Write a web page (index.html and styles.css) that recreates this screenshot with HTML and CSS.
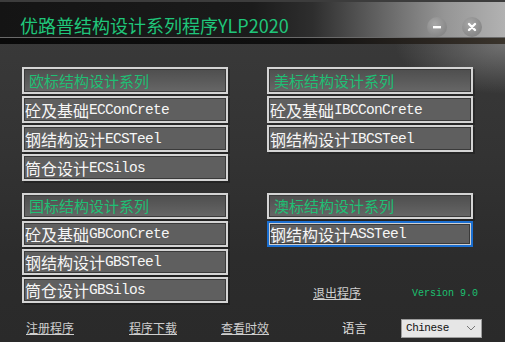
FILE: index.html
```html
<!DOCTYPE html>
<html lang="zh-CN">
<head>
<meta charset="utf-8">
<title>优路普结构设计系列程序YLP2020</title>
<link rel="stylesheet" href="styles.css">
</head>
<body>
<div class="win">
  <header class="titlebar">
    <h1 class="title">优路普结构设计系列程序YLP2020</h1>
    <div class="ctrls">
      <span class="cbtn"><svg width="10" height="10" viewBox="0 0 10 10"><rect x="1" y="4" width="8" height="2.4" fill="#fff"/></svg></span>
      <span class="cbtn"><svg width="10" height="10" viewBox="0 0 10 10"><path d="M2 2L8 8M8 2L2 8" stroke="#fff" stroke-width="2.4" stroke-linecap="round"/></svg></span>
    </div>
  </header>
  <div class="band"></div>
  <main class="grid">
    <section class="group g-tall">
      <div class="box head">欧标结构设计系列</div>
      <div class="box">砼及基础<span class="lat">ECConCrete</span></div>
      <div class="box">钢结构设计<span class="lat">ECSTeel</span></div>
      <div class="box">筒仓设计<span class="lat">ECSilos</span></div>
    </section>
    <section class="group g-tall">
      <div class="box head">美标结构设计系列</div>
      <div class="box">砼及基础<span class="lat">IBCConCrete</span></div>
      <div class="box">钢结构设计<span class="lat">IBCSTeel</span></div>
    </section>
    <section class="group">
      <div class="box head">国标结构设计系列</div>
      <div class="box">砼及基础<span class="lat">GBConCrete</span></div>
      <div class="box">钢结构设计<span class="lat">GBSTeel</span></div>
      <div class="box">筒仓设计<span class="lat">GBSilos</span></div>
    </section>
    <section class="group">
      <div class="box head">澳标结构设计系列</div>
      <div class="box active">钢结构设计<span class="lat">ASSTeel</span></div>
      <div class="exitrow">
        <span class="link">退出程序</span>
        <span class="ver">Version 9.0</span>
      </div>
    </section>
  </main>
  <footer class="bottombar">
    <span class="link">注册程序</span>
    <span class="link l2">程序下载</span>
    <span class="link l3">查看时效</span>
    <span class="lang">语言</span>
    <div class="select">
      <span class="sel-text">Chinese</span>
      <svg class="chev" width="10" height="6" viewBox="0 0 10 6"><path d="M1 1L5 5L9 1" fill="none" stroke="#777" stroke-width="1"/></svg>
    </div>
  </footer>
</div>
</body>
</html>
```
FILE: styles.css
```css
html, body {
  margin: 0;
  padding: 0;
}
body {
  width: 505px;
  height: 342px;
  overflow: hidden;
  font-family: "Noto Sans CJK SC", sans-serif;
  background:
    radial-gradient(ellipse 110px 50px at 100% 44px, rgba(150,150,150,0.6), rgba(150,150,150,0) 100%),
    linear-gradient(180deg, #3b3b3b 0, #333 45%, #2c2c2c 75%, #2a2a2a 100%);
}
.win {
  width: 505px;
  height: 342px;
}
.titlebar {
  box-sizing: border-box;
  height: 38px;
  display: flex;
  align-items: center;
  padding: 10px 23px 0 20px;
  border-top: 2px solid #3c3c3c;
  border-bottom: 1px solid #6a6a6a;
  background: linear-gradient(90deg, #141414 0, #1b1b1b 50%, #2e2e2e 62%, #666 76%, #959595 88%, #b2b2b2 100%);
}
.title {
  flex: 1;
  margin: 0;
  font-size: 18px;
  font-weight: 400;
  line-height: 26px;
  color: #1fc67a;
  white-space: nowrap;
}
.ctrls {
  display: flex;
  gap: 15px;
  margin-top: 4px;
}
.cbtn {
  width: 20px;
  height: 20px;
  border-radius: 50%;
  background: radial-gradient(circle at 40% 35%, #a8a8a8, #7a7a7a);
  display: grid;
  place-items: center;
}
.band {
  height: 6px;
  background: linear-gradient(90deg, #090909, #101010 60%, #2a2520 85%, #3a342c);
}
.grid {
  display: grid;
  grid-template-columns: 206px 206px;
  column-gap: 39px;
  row-gap: 12px;
  padding: 23px 0 0 22px;
  align-items: start;
}
.group {
  display: flex;
  flex-direction: column;
  gap: 2px;
}
.box {
  box-sizing: border-box;
  height: 26px;
  border: 2px solid #d4d4d4;
  box-shadow: inset 0 0 0 1px #3a3a3a, 2px 2px 0 rgba(0,0,0,0.25);
  background: #5f5f5f;
  color: #f6f6f6;
  display: flex;
  align-items: center;
  padding-left: 1px;
  font-size: 16px;
  line-height: 20px;
  white-space: nowrap;
}
.g-tall .box {
  height: 27px;
}
.head {
  color: #1fbf74;
  font-size: 15px;
  padding-left: 5px;
  background: linear-gradient(180deg, #4e4e4e, #5a5a5a 50%, #676767);
}
.lat {
  font-family: "Liberation Mono", monospace;
  font-size: 14.5px;
  letter-spacing: -0.7px;
}
.active {
  border-color: #1b6fd1;
  box-shadow: inset 0 0 0 1px #d0d0d0, inset 0 0 0 2px #3a3a3a;
}
.exitrow {
  display: flex;
  align-items: center;
  height: 16px;
  margin-top: 36px;
  padding-left: 46px;
  white-space: nowrap;
}
.link {
  color: #cfcfcf;
  font-size: 12px;
  line-height: 16px;
  text-decoration: underline;
  white-space: nowrap;
}
.ver {
  margin-left: 51px;
  color: #1cc070;
  font-family: "Liberation Mono", monospace;
  font-size: 10px;
  white-space: nowrap;
}
.bottombar {
  display: flex;
  align-items: center;
  height: 20px;
  margin-top: 15px;
  padding-left: 26px;
}
.l2 { margin-left: 55px; }
.l3 { margin-left: 44px; }
.lang {
  margin-left: 73px;
  color: #dedede;
  font-size: 12.5px;
  line-height: 16px;
}
.select {
  box-sizing: border-box;
  margin-left: 34px;
  width: 81px;
  height: 19px;
  background: #e6e6e6;
  border: 1px solid #9c9c9c;
  display: flex;
  align-items: center;
  justify-content: space-between;
  padding: 0 5px 0 4px;
}
.sel-text {
  font-family: "Liberation Mono", monospace;
  font-size: 11px;
  letter-spacing: -0.5px;
  color: #111;
}
```
